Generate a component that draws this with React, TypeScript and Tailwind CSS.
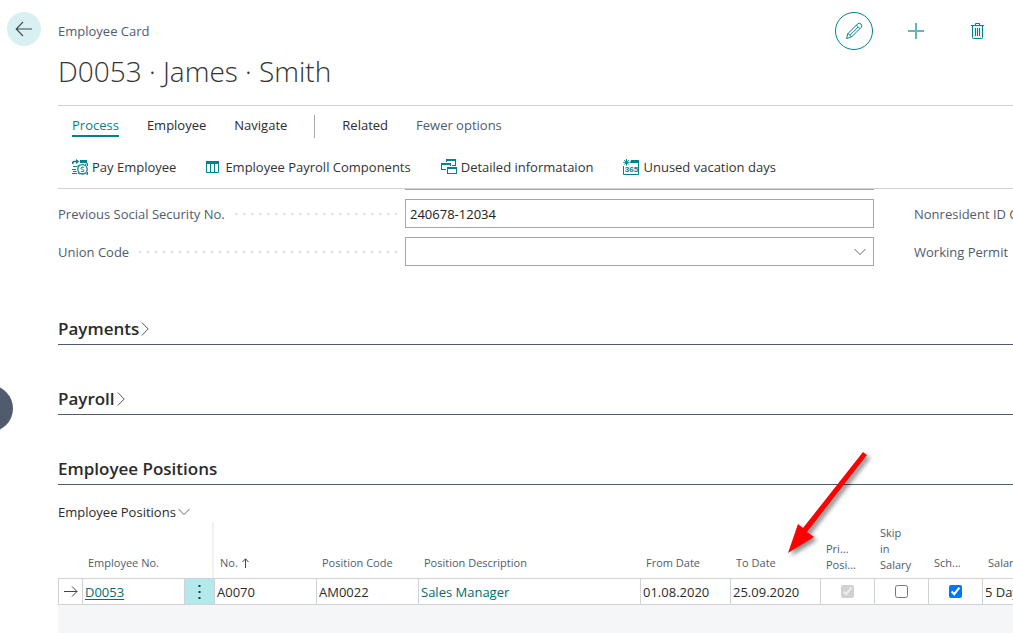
import React, { useState } from "react";

function BackIcon() {
  return (
    <svg width="18" height="16" viewBox="0 0 18 16" fill="none" stroke="#3c4a4c" strokeWidth="1.1" aria-hidden="true">
      <path d="M17 8H1.5M8 1L1.2 8L8 15" />
    </svg>
  );
}

function PencilIcon() {
  return (
    <svg width="18" height="18" viewBox="0 0 18 18" fill="none" stroke="#00828a" strokeWidth="1" aria-hidden="true">
      <path d="M1.5 16.5L3 11.5L12.7 1.8Q14.4 .6 16 2Q17.4 3.600 16.200 5.300L6.500 15Z" />
      <path d="M3 11.500L6.500 15M11.400 3.100L14.900 6.600M5 13.200L13.200 5" />
    </svg>
  );
}

function PlusIcon() {
  return (
    <svg width="16" height="16" viewBox="0 0 16 16" stroke="#00828a" strokeOpacity=".6" strokeWidth="2" aria-hidden="true">
      <path d="M0 8H16M8 0V16" />
    </svg>
  );
}

function TrashIcon() {
  return (
    <svg width="14" height="16" viewBox="0 0 14 16" fill="none" stroke="#00828a" aria-hidden="true">
      <path d="M2 3V15H12V3Z" fill="#e3f3f4" stroke="none" />
      <path d="M0 2.500H13M4.500 2V.5H8.500V2M1.500 3V14.500Q1.500 15.500 2.500 15.500H10.500Q11.500 15.500 11.500 14.500V3" />
      <path d="M4.500 5V13M6.500 5V13M8.500 5V13" />
    </svg>
  );
}

function PayIcon() {
  return (
    <svg width="16" height="16" viewBox="0 0 16 16" fill="none" stroke="#00828a" aria-hidden="true">
      <path d="M.7 5V4Q.7 2.500 2.500 2.500H5.500" strokeWidth="1.600" />
      <path d="M4 0L7.300 2.500L4 5Z" fill="#00828a" stroke="none" />
      <path d="M8 1H15V4H8Z" fill="#00828a" stroke="none" />
      <path d="M1 7.500H5M0 10.500H4M1 12.500H4.500M0 14.500H5" strokeWidth="1.200" />
      <circle cx="10.500" cy="10.300" r="4.700" strokeWidth="1.300" />
      <path d="M12 8.300Q9 7.500 9 9.200Q9 10.200 10.500 10.400Q12.200 10.800 12 11.900Q11.500 13 9 12.300M13 5.500L15.500 4.500V7M13.500 14.500L15.500 15.500V13M7 5.500L5.500 7.500M6 13.500L7.500 15.500" />
    </svg>
  );
}

function ColumnsIcon() {
  return (
    <svg width="13" height="12" viewBox="0 0 13 12" fill="none" stroke="#00828a" aria-hidden="true">
      <path d="M.5 .5H12.500V11.500H.5ZM4.500 3V11M8.500 3V11" />
      <path d="M0 0H13V3H0Z" fill="#00828a" stroke="none" />
    </svg>
  );
}

function DetailIcon() {
  return (
    <svg width="16" height="16" viewBox="0 0 16 16" shapeRendering="crispEdges" aria-hidden="true">
      <path d="M5.500 .5H14.500V6.500H5.500Z" fill="#fff" stroke="#00828a" />
      <path d="M5 0H15V2H5Z" fill="#00828a" />
      <path d="M0 3H11V11H0Z" fill="#fff" />
      <path d="M.5 4.500H9.500V10.500H.5Z" fill="#fff" stroke="#00828a" />
      <path d="M0 4H10V6H0Z" fill="#00828a" />
      <path d="M5 7H16V15H5Z" fill="#fff" />
      <path d="M6.500 8.500H15.500V14.500H6.500Z" fill="#fff" stroke="#00828a" />
      <path d="M6 8H16V10H6Z" fill="#00828a" />
    </svg>
  );
}

function CalendarIcon() {
  return (
    <svg width="16" height="16" viewBox="0 0 16 16" fill="none" stroke="#00828a" aria-hidden="true">
      <path d="M.5 7V15.500H15.500V1" />
      <path d="M8 1H16V4H7Z" fill="#00828a" stroke="none" />
      <path d="M3.500 0V6.500M.3 3.300H6.700M1.300 1L5.800 5.600M5.800 1L1.300 5.600" />
      <text x="8.500" y="13" textAnchor="middle" fontSize="8" fontWeight="700" fontFamily="Liberation Sans, sans-serif" fill="#00828a" stroke="none">
        365
      </text>
    </svg>
  );
}

function ChevronDown() {
  return (
    <svg width="12" height="8" viewBox="0 0 12 8" fill="none" stroke="#666" aria-hidden="true">
      <path d="M.5 1L6 6.500L11.500 1" />
    </svg>
  );
}

function ChevronRight() {
  return (
    <svg width="8" height="14" viewBox="0 0 8 14" fill="none" stroke="#555" aria-hidden="true">
      <path d="M.8 .5L7.200 7L.8 13.500" />
    </svg>
  );
}

const tabs = ["Process", "Employee", "Navigate"];

const actions = [
  { label: "Pay Employee", icon: <PayIcon />, gap: "gap-1" },
  { label: "Employee Payroll Components", icon: <ColumnsIcon />, gap: "gap-1.5" },
  { label: "Detailed informataion", icon: <DetailIcon />, gap: "gap-1" },
  { label: "Unused vacation days", icon: <CalendarIcon />, gap: "gap-1" },
];

function FieldLabel({ id, children }: { id: string; children: string }) {
  return (
    <div className="flex w-[347px] shrink-0 items-center gap-1.5 pr-2">
      <label htmlFor={id} className="text-[#505c6d]">{children}</label>
      <span className="h-0.5 flex-1 bg-[linear-gradient(to_right,transparent_6px,#d6d8db_6px)] bg-[length:8px_2px] bg-right bg-repeat-x" />
    </div>
  );
}

function SectionTitle({ children, collapsed = false }: { children: string; collapsed?: boolean }) {
  return (
    <h2 className="flex h-8 items-center border-b border-[#505c6d] text-[17px] font-semibold text-[#2b2b2b]">
      {collapsed ? (
        <button type="button" className="flex items-center gap-0.5">
          {children}
          <ChevronRight />
        </button>
      ) : (
        children
      )}
    </h2>
  );
}

const th = "px-1.5 pb-[7px] text-left align-bottom font-normal whitespace-nowrap";
const thWrap = "px-1.5 pb-[5px] text-left align-bottom font-normal";
const td = "border-y border-l border-[#d0d2d6] px-0.5 whitespace-nowrap";

export default function App() {
  const [ssn, setSsn] = useState("240678-12034");
  const [skip, setSkip] = useState(false);
  const [schedule, setSchedule] = useState(true);

  return (
    <div className="relative flex min-h-screen flex-col overflow-hidden bg-white font-['Open_Sans','Noto_Sans',sans-serif] text-[13px] leading-5 text-[#333]">
      <div className="absolute top-[385px] -left-[34px] size-[47px] rounded-full bg-[#505c6d]" />

      <header className="flex h-[105px] items-start pt-3 pl-[7px]">
        <button type="button" aria-label="Back" className="flex size-[34px] shrink-0 items-center justify-center rounded-full bg-[#d8f0f1]">
          <BackIcon />
        </button>
        <div className="min-w-0 flex-1 pt-[9px] pl-[17px]">
          <p className="text-[#505c6d]">Employee Card</p>
          <h1 className="mt-3 text-[28px] leading-9 font-light text-[#333]">D0053 · James · Smith</h1>
        </div>
        <div className="flex items-center pr-[28px]">
          <button type="button" aria-label="Edit" className="flex size-[38px] items-center justify-center rounded-full border border-[#00828a]">
            <PencilIcon />
          </button>
          <button type="button" aria-label="New" className="ml-[35px] flex"><PlusIcon /></button>
          <button type="button" aria-label="Delete" className="ml-[47px] flex"><TrashIcon /></button>
        </div>
      </header>

      <main className="flex min-w-0 flex-1 flex-col pl-[58px]">
        <div className="h-[84px] border-y border-[#d0d2d6] pl-3.5">
          <nav className="flex h-[41px] items-center text-[#2b2b2b]">
            <div className="flex gap-7">
              {tabs.map((tab, i) => (
                <button
                  key={tab}
                  type="button"
                  className={i === 0 ? "border-b-2 border-[#00828a] leading-[19px] text-[#00828a]" : "border-b-2 border-transparent leading-[19px]"}
                >
                  {tab}
                </button>
              ))}
            </div>
            <span className="mx-[27px] h-[23px] w-px bg-[#a3a9b3]" />
            <button type="button" className="border-b-2 border-transparent leading-[19px]">Related</button>
            <button type="button" className="ml-7 border-b-2 border-transparent leading-[19px] text-[#505c6d]">Fewer options</button>
          </nav>
          <div className="flex h-10 items-center gap-[30px]">
            {actions.map((a) => (
              <button key={a.label} type="button" className={`flex items-center whitespace-nowrap ${a.gap}`}>
                {a.icon}
                {a.label}
              </button>
            ))}
          </div>
        </div>

        <div className="grid grid-cols-[minmax(0,1fr)_99px] gap-x-10">
          <div className="flex flex-col">
            <div className="ml-[347px] h-px bg-[#a6a6a6]" />
            <div className="mt-[9px] flex h-[29px]">
              <FieldLabel id="ssn">Previous Social Security No.</FieldLabel>
              <input
                id="ssn"
                value={ssn}
                onChange={(e) => setSsn(e.target.value)}
                className="min-w-0 flex-1 border border-[#a6a6a6] px-1 text-[#212121]"
              />
            </div>
            <div className="mt-[9px] flex h-[29px]">
              <FieldLabel id="union">Union Code</FieldLabel>
              <div className="relative min-w-0 flex-1">
                <select id="union" className="size-full appearance-none border border-[#a6a6a6] px-1">
                  <option value="" />
                </select>
                <span className="pointer-events-none absolute top-[11px] right-2"><ChevronDown /></span>
              </div>
            </div>
          </div>
          <div className="flex flex-col overflow-hidden pt-2.5 whitespace-nowrap text-[#505c6d]">
            <p className="flex h-[29px] items-center">Nonresident ID Code</p>
            <p className="mt-[9px] flex h-[29px] items-center">Working Permit</p>
          </div>
        </div>

        <div className="mt-[47px] flex flex-col gap-[38px]">
          <SectionTitle collapsed>Payments</SectionTitle>
          <SectionTitle collapsed>Payroll</SectionTitle>
          <SectionTitle>Employee Positions</SectionTitle>
        </div>

        <section className="relative flex flex-1 flex-col">
          <button type="button" className="mt-[17px] flex items-center gap-0.5 self-start text-[#2b2b2b]">
            Employee Positions
            <ChevronDown />
          </button>
          <table className="w-[1014px] table-fixed border-separate border-spacing-0">
            <colgroup>
              <col className="w-[24px]" />
              <col className="w-[102px]" />
              <col className="w-[30px]" />
              <col className="w-[102px]" />
              <col className="w-[102px]" />
              <col className="w-[222px]" />
              <col className="w-[90px]" />
              <col className="w-[90px]" />
              <col className="w-[54px]" />
              <col className="w-[54px]" />
              <col className="w-[54px]" />
              <col className="w-[90px]" />
            </colgroup>
            <thead>
              <tr className="h-14 text-[11px] leading-4 text-[#505c6d]">
                <td />
                <th className={th}>Employee No.</th>
                <td className="border-r-2 border-[#f0f1f3]" />
                <th className={th}>
                  <span className="flex items-center gap-1">
                    No.
                    <svg width="7" height="10" viewBox="0 0 7 10" fill="none" stroke="#444" aria-hidden="true">
                      <path d="M3.500 10V1M.5 4L3.500 .8L6.500 4" />
                    </svg>
                  </span>
                </th>
                <th className={th}>Position Code</th>
                <th className={th}>Position Description</th>
                <th className={th}>From Date</th>
                <th className={th}>To Date</th>
                <th className={thWrap}>Pri...<br />Posi...</th>
                <th className={thWrap}>Skip<br />in<br />Salary</th>
                <th className={th}>Sch...</th>
                <th className={th}>Salary Type</th>
              </tr>
            </thead>
            <tbody>
              <tr className="h-[27px] text-[#2b2b2b]">
                <td className={td}>
                  <svg className="mx-auto" width="14" height="11" viewBox="0 0 14 11" fill="none" stroke="#444" aria-hidden="true">
                    <path d="M0 5.500H13M8 .5L13 5.500L8 10.500" />
                  </svg>
                </td>
                <td className={td}>
                  <a href="#D0053" className="text-[#006d73] underline underline-offset-2">D0053</a>
                </td>
                <td className="border-y border-l border-[#d0d2d6] bg-[#b2e9ec]">
                  <button type="button" aria-label="Row actions" className="flex w-full justify-center">
                    <svg width="3" height="14" viewBox="0 0 3 14" fill="#333" aria-hidden="true">
                      <path d="M.5 0h2v2h-2zM.5 6h2v2h-2zM.5 12h2v2h-2z" />
                    </svg>
                  </button>
                </td>
                <td className={td}>A0070</td>
                <td className={td}>AM0022</td>
                <td className={td}><a href="#position" className="text-[#006d73]">Sales Manager</a></td>
                <td className={td}>01.08.2020</td>
                <td className={td}>25.09.2020</td>
                <td className={td}>
                  <input type="checkbox" aria-label="Primary Position" checked disabled readOnly className="mx-auto block size-[13px]" />
                </td>
                <td className={td}>
                  <input type="checkbox" aria-label="Skip in Salary" checked={skip} onChange={(e) => setSkip(e.target.checked)} className="mx-auto block size-[13px]" />
                </td>
                <td className={td}>
                  <input type="checkbox" aria-label="Schedule" checked={schedule} onChange={(e) => setSchedule(e.target.checked)} className="mx-auto block size-[13px]" />
                </td>
                <td className={td}>5 Days</td>
              </tr>
            </tbody>
          </table>
          <div className="flex-1 bg-[#f5f6f8]" />
          <svg
            className="pointer-events-none absolute -top-[35px] left-[727px] drop-shadow-[3px_3px_2px_rgba(0,0,0,0.45)]"
            width="90"
            height="110"
            viewBox="0 0 90 110"
            fill="#f00"
            aria-hidden="true"
          >
            <path d="M3 103L13 74L18 78L78 2L82 5L22 82L29 87Z" />
          </svg>
        </section>
      </main>
    </div>
  );
}
